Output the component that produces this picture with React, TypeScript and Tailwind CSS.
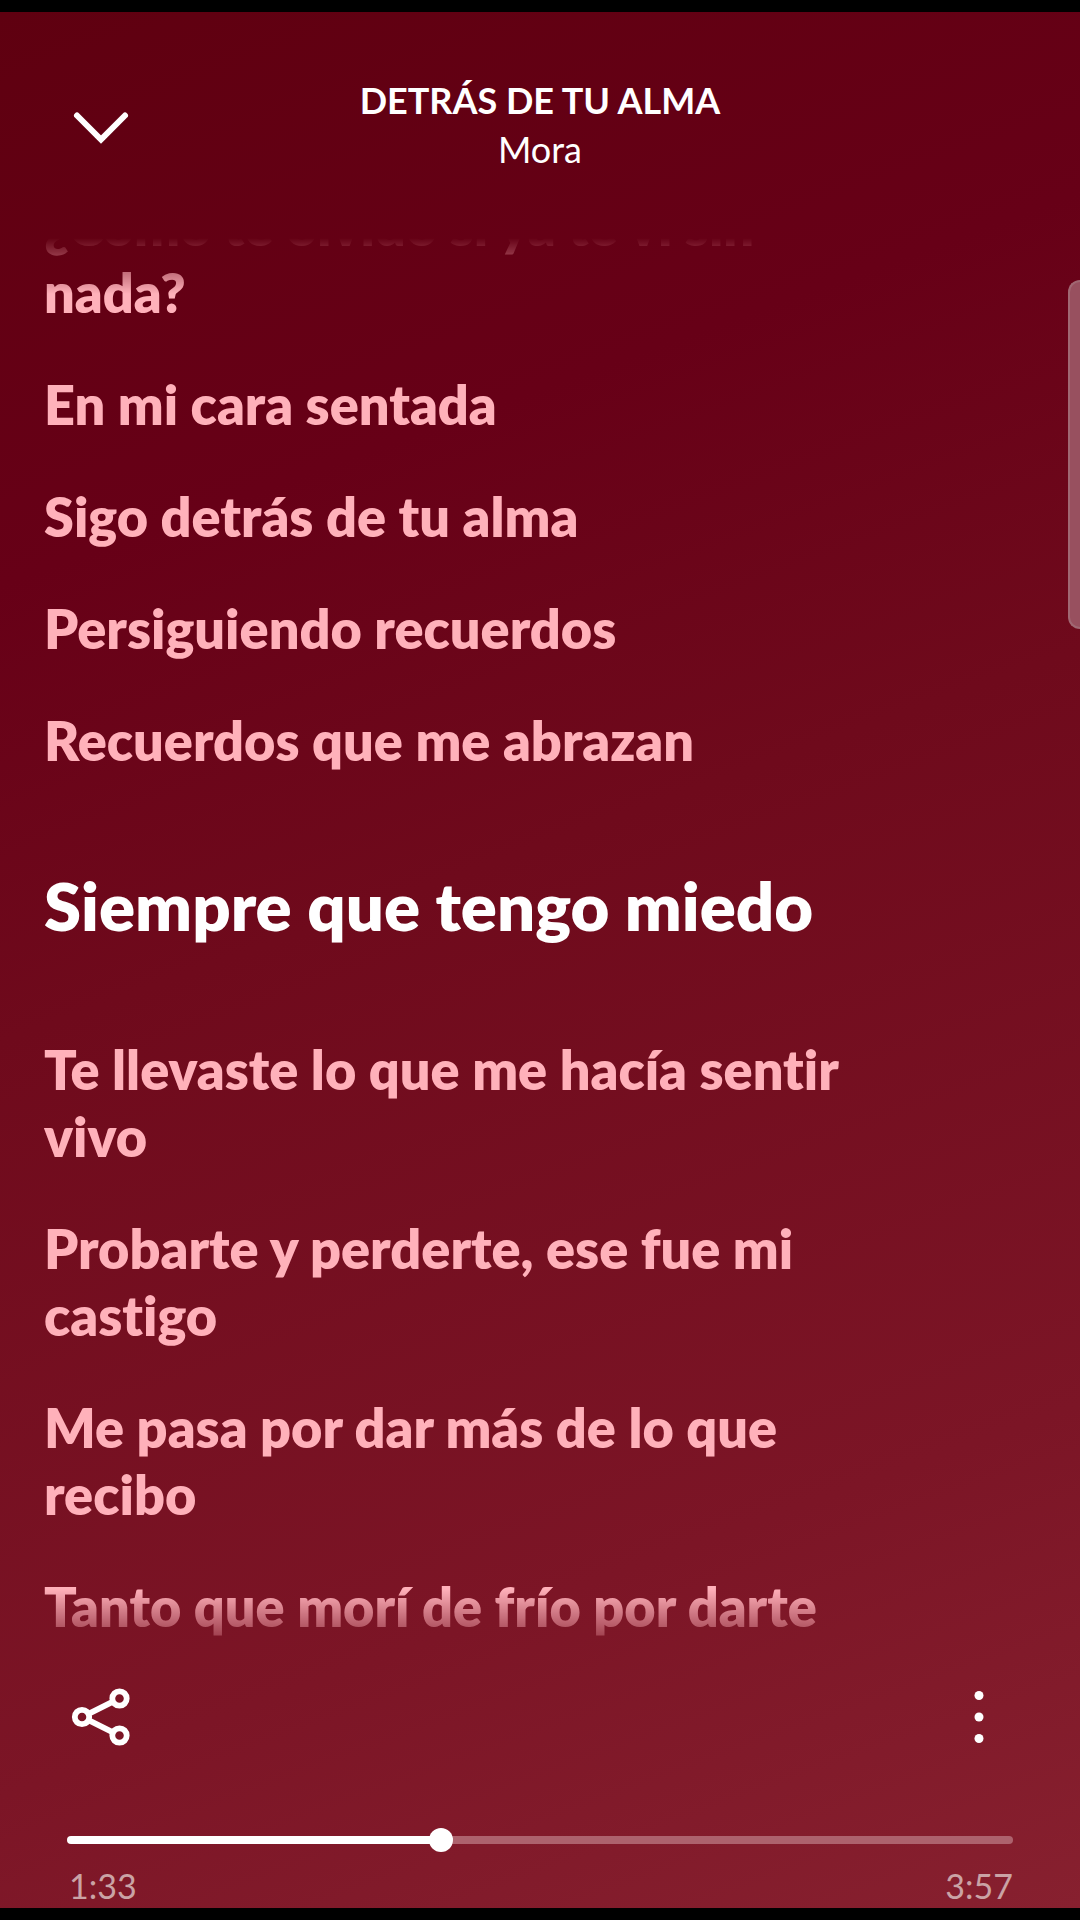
import React, { useState } from "react";

const lyrics = [
  "¿Cómo te olvido si ya te vi sin nada?",
  "En mi cara sentada",
  "Sigo detrás de tu alma",
  "Persiguiendo recuerdos",
  "Recuerdos que me abrazan",
  "Siempre que tengo miedo",
  "Te llevaste lo que me hacía sentir vivo",
  "Probarte y perderte, ese fue mi castigo",
  "Me pasa por dar más de lo que recibo",
  "Tanto que morí de frío por darte",
];

const activeLine = 5;
const duration = 237;

const formatTime = (seconds: number) =>
  `${Math.floor(seconds / 60)}:${String(seconds % 60).padStart(2, "0")}`;

const Header = () => (
  <header className="grid grid-cols-[1fr_auto_1fr] items-center px-[67px] py-16">
    <button aria-label="Close" className="w-17 cursor-pointer">
      <svg viewBox="0 0 68 68" className="size-17" fill="none" stroke="currentColor" strokeWidth="6">
        <path d="M10 24.500 L34 48.500 L58 24.500" strokeLinecap="round" strokeLinejoin="miter" />
      </svg>
    </button>
    <div className="text-center text-4xl leading-[49px]">
      <h1 className="font-bold">DETRÁS DE TU ALMA</h1>
      <p>Mora</p>
    </div>
  </header>
);

const Lyrics = () => (
  <main className="min-h-0 flex-1 overflow-hidden mask-[linear-gradient(to_bottom,transparent,black_56px,black_calc(100%-66px),transparent)]">
    {/* List is scrolled so that the active line sits in the middle */}
    <ul className="-mt-[46px] flex flex-col gap-[45px] pr-[20%] pl-11 text-[54px] leading-[67px] font-extrabold text-[#ffb1ba] [font-variant-ligatures:none]">
      {lyrics.map((line, index) =>
        index === activeLine ? (
          <li key={index} className="py-11 text-[67px] leading-[84px] whitespace-nowrap text-white">
            {line}
          </li>
        ) : (
          <li key={index}>{line}</li>
        )
      )}
    </ul>
  </main>
);

const Player = () => {
  const [time, setTime] = useState<number>(93);
  const progress = (time / duration) * 100;

  return (
    <footer className="px-[67px] pt-7 pb-0.5">
      <div className="flex items-center justify-between">
        <button aria-label="Share" className="cursor-pointer">
          <svg viewBox="0 0 68 68" className="size-17" fill="none" stroke="currentColor" strokeWidth="5.800">
            <circle cx="15" cy="34" r="7.200" />
            <circle cx="52.500" cy="15.500" r="7.200" />
            <circle cx="52.500" cy="52.500" r="7.200" />
            <path d="M21.500 30.800 L46 18.700 M21.500 37.200 L46 49.300" />
          </svg>
        </button>
        <button aria-label="More options" className="cursor-pointer">
          <svg viewBox="0 0 68 68" className="size-17" fill="currentColor">
            <circle cx="34" cy="12.500" r="4.500" />
            <circle cx="34" cy="34" r="4.500" />
            <circle cx="34" cy="55.500" r="4.500" />
          </svg>
        </button>
      </div>

      <input
        type="range"
        aria-label="Playback position"
        min={0}
        max={duration}
        value={time}
        onChange={(e) => setTime(Number(e.target.value))}
        className="mt-[85px] block h-2 w-full cursor-pointer appearance-none rounded-sm [&::-webkit-slider-thumb]:size-6 [&::-webkit-slider-thumb]:appearance-none [&::-webkit-slider-thumb]:rounded-full [&::-webkit-slider-thumb]:bg-white"
        style={{
          background: `linear-gradient(to right, #fff ${progress}%, #ad626d ${progress}%)`,
        }}
      />

      <div className="mt-[22px] flex justify-between pl-0.5 text-[34px] leading-10 text-[#caa3a5]">
        <span>{formatTime(time)}</span>
        <span>{formatTime(duration)}</span>
      </div>
    </footer>
  );
};

export default function App() {
  return (
    <div className="h-screen bg-black py-3 font-['Lato',sans-serif] text-white">
      <div className="relative flex h-full flex-col overflow-hidden bg-[linear-gradient(160deg,#5f0010_0%,#670017_25%,#6f0a1c_45%,#7c1526_78%,#87202f_100%)]">
        <Header />
        <Lyrics />
        <Player />

        {/* Edge handle */}
        <div className="absolute top-[268px] right-0 h-[349px] w-3 rounded-l-xl border-2 border-r-0 border-[#a06873] bg-[#98505f]" />
      </div>
    </div>
  );
}
